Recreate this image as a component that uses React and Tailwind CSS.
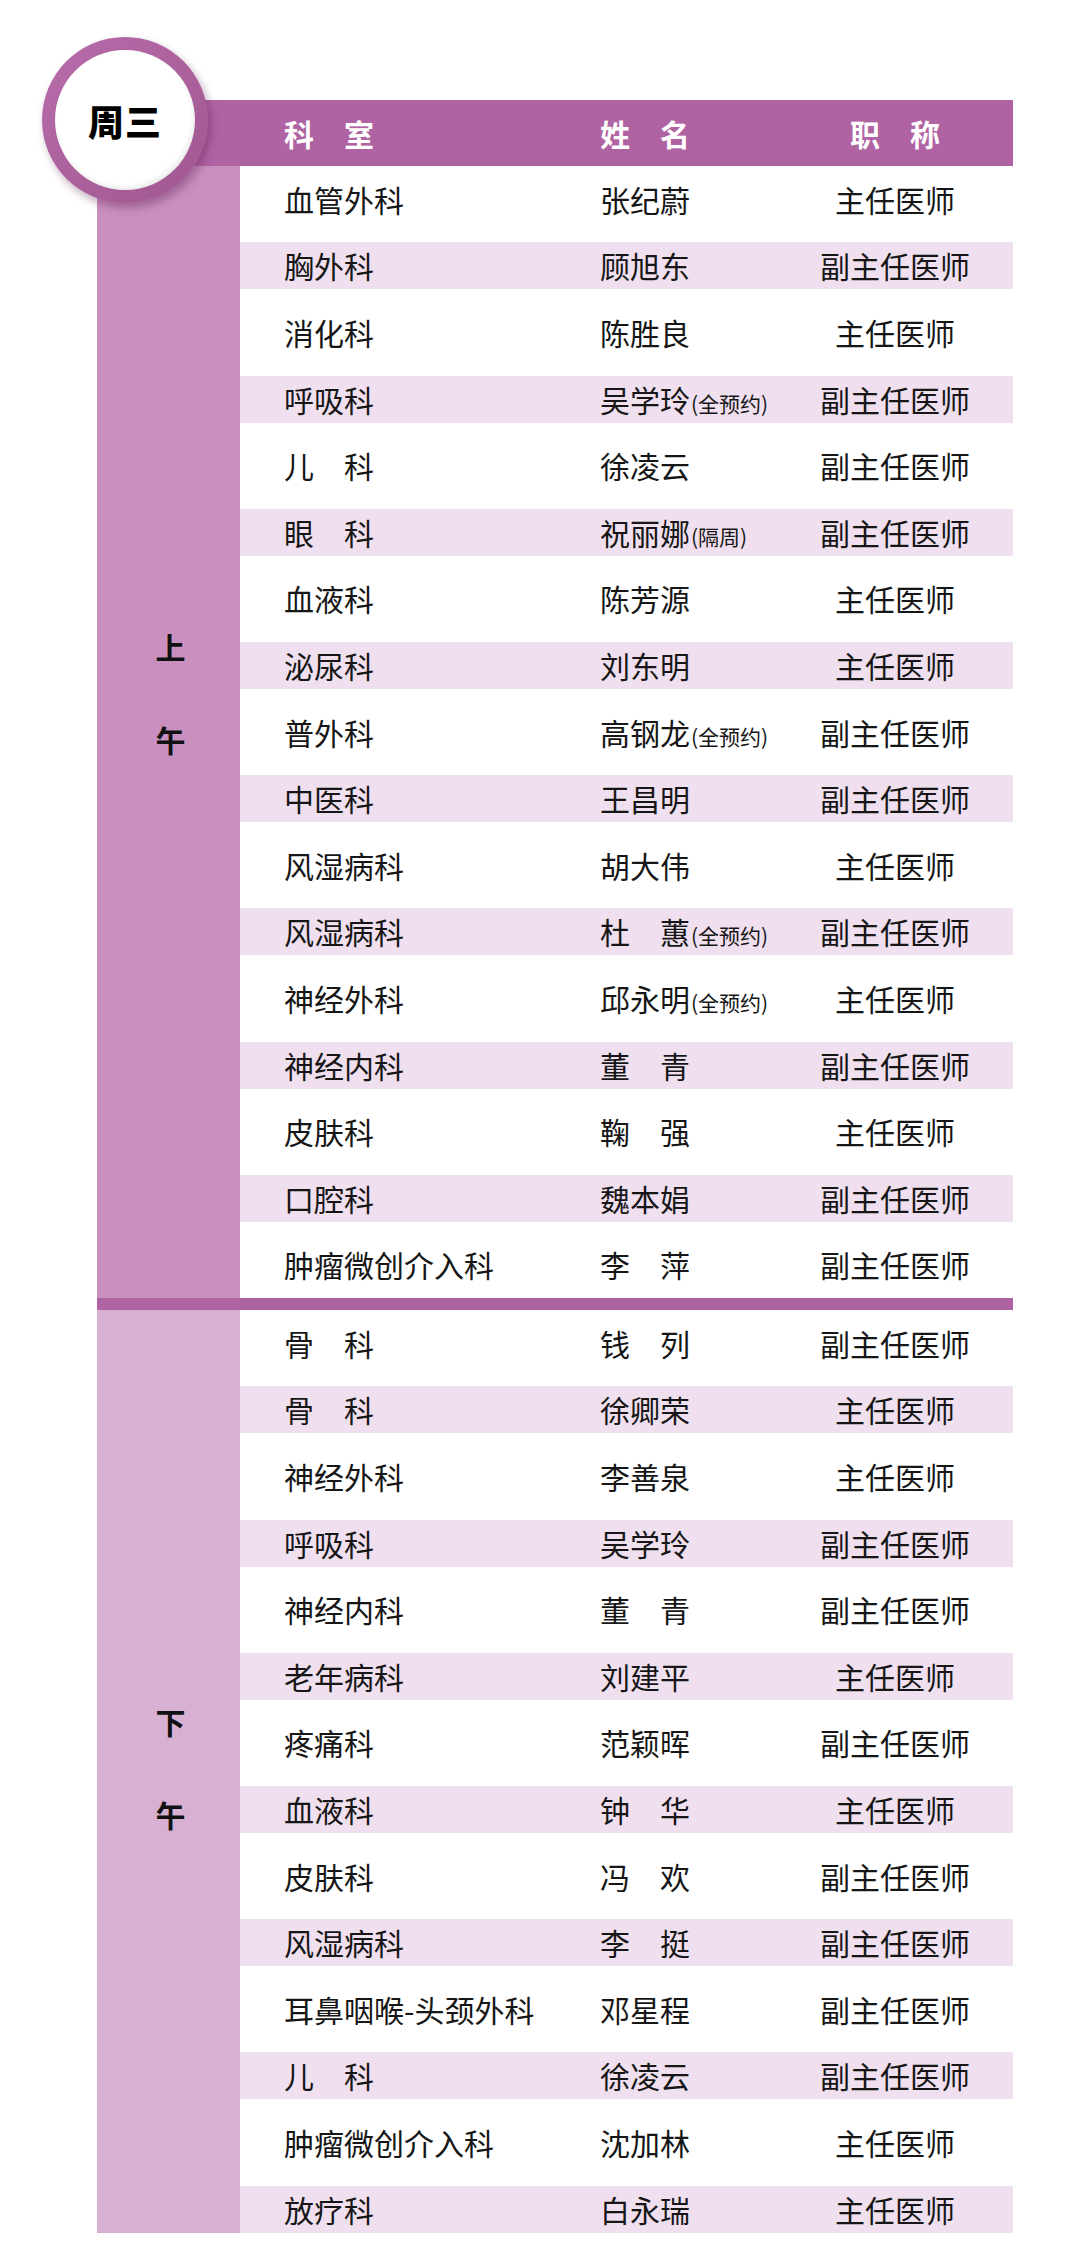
import React from 'react'

// 周三门诊排班表
const morning = [
  ['血管外科', '张纪蔚', '', '主任医师'],
  ['胸外科', '顾旭东', '', '副主任医师'],
  ['消化科', '陈胜良', '', '主任医师'],
  ['呼吸科', '吴学玲', '(全预约)', '副主任医师'],
  ['儿　科', '徐凌云', '', '副主任医师'],
  ['眼　科', '祝丽娜', '(隔周)', '副主任医师'],
  ['血液科', '陈芳源', '', '主任医师'],
  ['泌尿科', '刘东明', '', '主任医师'],
  ['普外科', '高钢龙', '(全预约)', '副主任医师'],
  ['中医科', '王昌明', '', '副主任医师'],
  ['风湿病科', '胡大伟', '', '主任医师'],
  ['风湿病科', '杜　蕙', '(全预约)', '副主任医师'],
  ['神经外科', '邱永明', '(全预约)', '主任医师'],
  ['神经内科', '董　青', '', '副主任医师'],
  ['皮肤科', '鞠　强', '', '主任医师'],
  ['口腔科', '魏本娟', '', '副主任医师'],
  ['肿瘤微创介入科', '李　萍', '', '副主任医师'],
]

const afternoon = [
  ['骨　科', '钱　列', '', '副主任医师'],
  ['骨　科', '徐卿荣', '', '主任医师'],
  ['神经外科', '李善泉', '', '主任医师'],
  ['呼吸科', '吴学玲', '', '副主任医师'],
  ['神经内科', '董　青', '', '副主任医师'],
  ['老年病科', '刘建平', '', '主任医师'],
  ['疼痛科', '范颖晖', '', '副主任医师'],
  ['血液科', '钟　华', '', '主任医师'],
  ['皮肤科', '冯　欢', '', '副主任医师'],
  ['风湿病科', '李　挺', '', '副主任医师'],
  ['耳鼻咽喉-头颈外科', '邓星程', '', '副主任医师'],
  ['儿　科', '徐凌云', '', '副主任医师'],
  ['肿瘤微创介入科', '沈加林', '', '主任医师'],
  ['放疗科', '白永瑞', '', '主任医师'],
]

function Cells({ dept, name, note, title }) {
  return (
    <div className="flex items-center w-full">
      <div className="w-[360px] pl-[44px] whitespace-nowrap">{dept}</div>
      <div className="w-[200px] flex items-baseline whitespace-nowrap">
        <span>{name}</span>
        {note && <span className="text-[21px] ml-[1px]">{note}</span>}
      </div>
      <div className="w-[190px] text-center whitespace-nowrap">{title}</div>
    </div>
  )
}

function Row({ row, tinted, last }) {
  const [dept, name, note, title] = row
  return (
    <div className={`flex ${last ? 'h-[56.8px] items-end' : 'h-[66.6px] items-center'}`}>
      <div className={`w-full h-[47px] flex items-center ${tinted ? 'bg-[#f0e0ef]' : ''}`}>
        <Cells dept={dept} name={name} note={note} title={title} />
      </div>
    </div>
  )
}

function Section({ rows, label, sideBg, labelTop, endsTable }) {
  return (
    <div className="flex">
      <div className={`w-[143px] shrink-0 ${sideBg} flex flex-col items-center pl-[4px] gap-[63px] font-bold text-[30px] leading-none text-[#111]`} style={{ paddingTop: labelTop }}>
        <span>{label[0]}</span>
        <span>{label[1]}</span>
      </div>
      <div className="flex-1 bg-white text-[30px] text-[#161616]">
        {rows.map((r, i) => (
          <Row key={i} row={r} tinted={i % 2 === 1} last={endsTable && i === rows.length - 1} />
        ))}
      </div>
    </div>
  )
}

export default function App() {
  return (
    <div className="relative w-[1080px] h-[2268px] bg-white font-['Noto_Sans_CJK_SC','Noto_Sans',sans-serif] overflow-hidden">
      <div className="pt-[100px] pl-[97px] w-[1013px]">
        {/* 表头 */}
        <div className="flex items-center h-[66px] bg-[#b063a3] text-white font-bold text-[30px]">
          <div className="w-[143px] shrink-0" />
          <Cells dept="科　室" name="姓　名" note="" title="职　称" />
        </div>

        <Section rows={morning} label="上午" sideBg="bg-[#c98fbf]" labelTop={465} />

        <div className="h-[12px] bg-[#b063a3]" />

        <Section rows={afternoon} label="下午" sideBg="bg-[#d8b0d2]" labelTop={396} endsTable />
      </div>

      {/* 星期圆标 */}
      <div className="absolute left-[42px] top-[37px] w-[166px] h-[166px] rounded-full bg-gradient-to-br from-[#b86dab] to-[#a0568f] shadow-[3px_5px_8px_rgba(80,20,70,0.35)] flex items-center justify-center">
        <div className="w-[140px] h-[140px] rounded-full bg-white shadow-[inset_-2px_-3px_5px_rgba(0,0,0,0.08)] flex items-center justify-center">
          <span className="text-[36px] font-black text-black leading-none tracking-[1px]">周三</span>
        </div>
      </div>
    </div>
  )
}
